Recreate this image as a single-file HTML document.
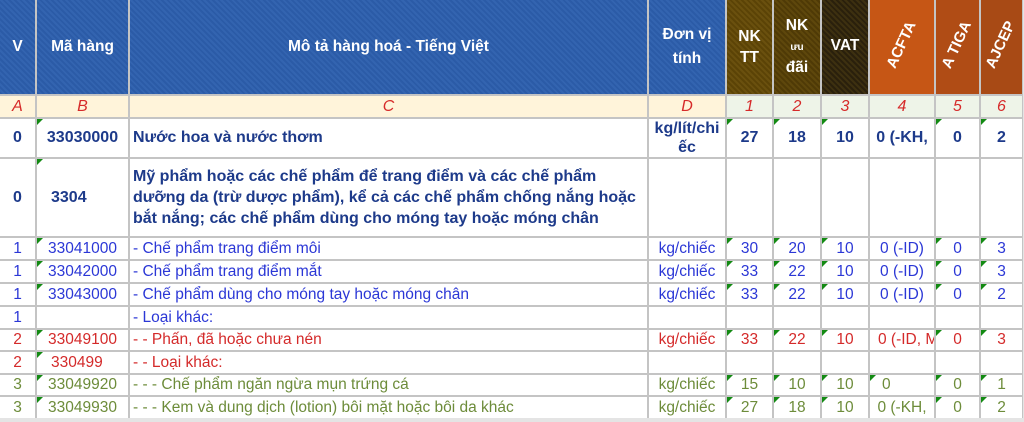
<!DOCTYPE html>
<html><head><meta charset="utf-8"><style>
body{margin:0;width:1024px;height:422px;overflow:hidden;background:#e4e4e4;font-family:"Liberation Sans",Arial,sans-serif}
.g{display:grid;grid-template-columns:35px 91px 517px 76px 45px 46px 46px 64px 43px 41px;grid-template-rows:94px 21px 38px 77px 21px 21px 21px 21px 20px 21px 20px 21px;gap:2px;background:#c4c4c4;width:1023px;position:absolute;left:0;top:0;padding-right:1px;box-sizing:border-box}
.g>div{background:#fff;position:relative;display:flex;align-items:center;font-size:15.5px;overflow:hidden;white-space:nowrap}
.c{justify-content:center}
.h{color:#fff;font-weight:bold;font-size:15.5px!important;justify-content:center;text-align:center;white-space:normal!important;line-height:24px}
.hb{background:repeating-linear-gradient(45deg,#2b5ba7 0 2px,#3364b0 2px 4px)!important}
.h1{background:repeating-linear-gradient(45deg,#5b4306 0 2px,#6a500e 2px 4px)!important}
.h2{background:repeating-linear-gradient(45deg,#4f3a06 0 2px,#5e470c 2px 4px)!important}
.h3{background:repeating-linear-gradient(45deg,#2a200c 0 2px,#3d3010 2px 4px)!important}
.h4{background:#c65615!important}.h5{background:#b04c15!important}.h6{background:#a84a15!important}
.r span{display:block;transform:rotate(-65deg);white-space:nowrap;font-size:15px;margin-top:-4px}
.l{background:#fff4da!important;color:#d62a2a;font-style:italic;justify-content:center;font-size:16px!important}
.n{background:#eef4e8!important;color:#d62a2a;font-style:italic;justify-content:center;font-size:16px!important}
.b{color:#1d3a8a;font-weight:bold;font-size:16px!important}
.p{color:#2b37d6}.rd{color:#d42a2a}.gr{color:#6d8c3a}
.t::before{content:"";position:absolute;left:0;top:0;border-top:6px solid #138a13;border-right:6px solid transparent}
.pl{padding-left:3px}
</style></head><body>
<div class="g">
<div class="h hb">V</div><div class="h hb">Mã hàng</div><div class="h hb">Mô tả hàng hoá - Tiếng Việt</div><div class="h hb"><div>Đơn vị<br>tính</div></div><div class="h h1"><div style="line-height:21px">NK<br>TT</div></div><div class="h h2"><div style="line-height:20px">NK<br><span style="font-size:10px">ưu</span><br>đãi</div></div><div class="h h3"><div style="margin-top:-2px">VAT</div></div><div class="h h4 r"><span>ACFTA</span></div><div class="h h5 r"><span>A TIGA</span></div><div class="h h6 r"><span>AJCEP</span></div>

<div class="l">A</div><div class="l">B</div><div class="l">C</div><div class="l">D</div><div class="n">1</div><div class="n">2</div><div class="n">3</div><div class="n">4</div><div class="n">5</div><div class="n">6</div>

<div class="c b">0</div><div class="c b t">33030000</div><div class="b pl">Nước hoa và nước thơm</div><div class="c b" style="white-space:normal;text-align:center;line-height:19px">kg/lít/chi<br>ếc</div><div class="c b t">27</div><div class="c b t">18</div><div class="c b t">10</div><div class="c b">0 (-KH,</div><div class="c b t">0</div><div class="c b t">2</div>

<div class="c b">0</div><div class="b t pl" style="padding-left:14px">3304</div><div class="b pl" style="white-space:normal;line-height:21px;padding-right:8px">Mỹ phẩm hoặc các chế phẩm để trang điểm và các chế phẩm dưỡng da (trừ dược phẩm), kể cả các chế phẩm chống nắng hoặc bắt nắng; các chế phẩm dùng cho móng tay hoặc móng chân</div><div></div><div></div><div></div><div></div><div></div><div></div><div></div>

<div class="c p">1</div><div class="c p t">33041000</div><div class="p pl">- Chế phẩm trang điểm môi</div><div class="c p">kg/chiếc</div><div class="c p t">30</div><div class="c p t">20</div><div class="c p t">10</div><div class="c p">0 (-ID)</div><div class="c p t">0</div><div class="c p t">3</div>

<div class="c p">1</div><div class="c p t">33042000</div><div class="p pl">- Chế phẩm trang điểm mắt</div><div class="c p">kg/chiếc</div><div class="c p t">33</div><div class="c p t">22</div><div class="c p t">10</div><div class="c p">0 (-ID)</div><div class="c p t">0</div><div class="c p t">3</div>

<div class="c p">1</div><div class="c p t">33043000</div><div class="p pl">- Chế phẩm dùng cho móng tay hoặc móng chân</div><div class="c p">kg/chiếc</div><div class="c p t">33</div><div class="c p t">22</div><div class="c p t">10</div><div class="c p">0 (-ID)</div><div class="c p t">0</div><div class="c p t">2</div>

<div class="c p">1</div><div></div><div class="p pl">- Loại khác:</div><div></div><div></div><div></div><div></div><div></div><div></div><div></div>

<div class="c rd">2</div><div class="c rd t">33049100</div><div class="rd pl">- - Phấn, đã hoặc chưa nén</div><div class="c rd">kg/chiếc</div><div class="c rd t">33</div><div class="c rd t">22</div><div class="c rd t">10</div><div class="rd pl" style="padding-left:8px">0 (-ID, M</div><div class="c rd t">0</div><div class="c rd t">3</div>

<div class="c rd">2</div><div class="rd t" style="padding-left:14px">330499</div><div class="rd pl">- - Loại khác:</div><div></div><div></div><div></div><div></div><div></div><div></div><div></div>

<div class="c gr">3</div><div class="c gr t">33049920</div><div class="gr pl">- - - Chế phẩm ngăn ngừa mụn trứng cá</div><div class="c gr">kg/chiếc</div><div class="c gr t">15</div><div class="c gr t">10</div><div class="c gr t">10</div><div class="gr t pl" style="padding-left:12px">0</div><div class="c gr t">0</div><div class="c gr t">1</div>

<div class="c gr">3</div><div class="c gr t">33049930</div><div class="gr pl">- - - Kem và dung dịch (lotion) bôi mặt hoặc bôi da khác</div><div class="c gr">kg/chiếc</div><div class="c gr t">27</div><div class="c gr t">18</div><div class="c gr t">10</div><div class="c gr">0 (-KH,</div><div class="c gr t">0</div><div class="c gr t">2</div>
</div>
</body></html>
